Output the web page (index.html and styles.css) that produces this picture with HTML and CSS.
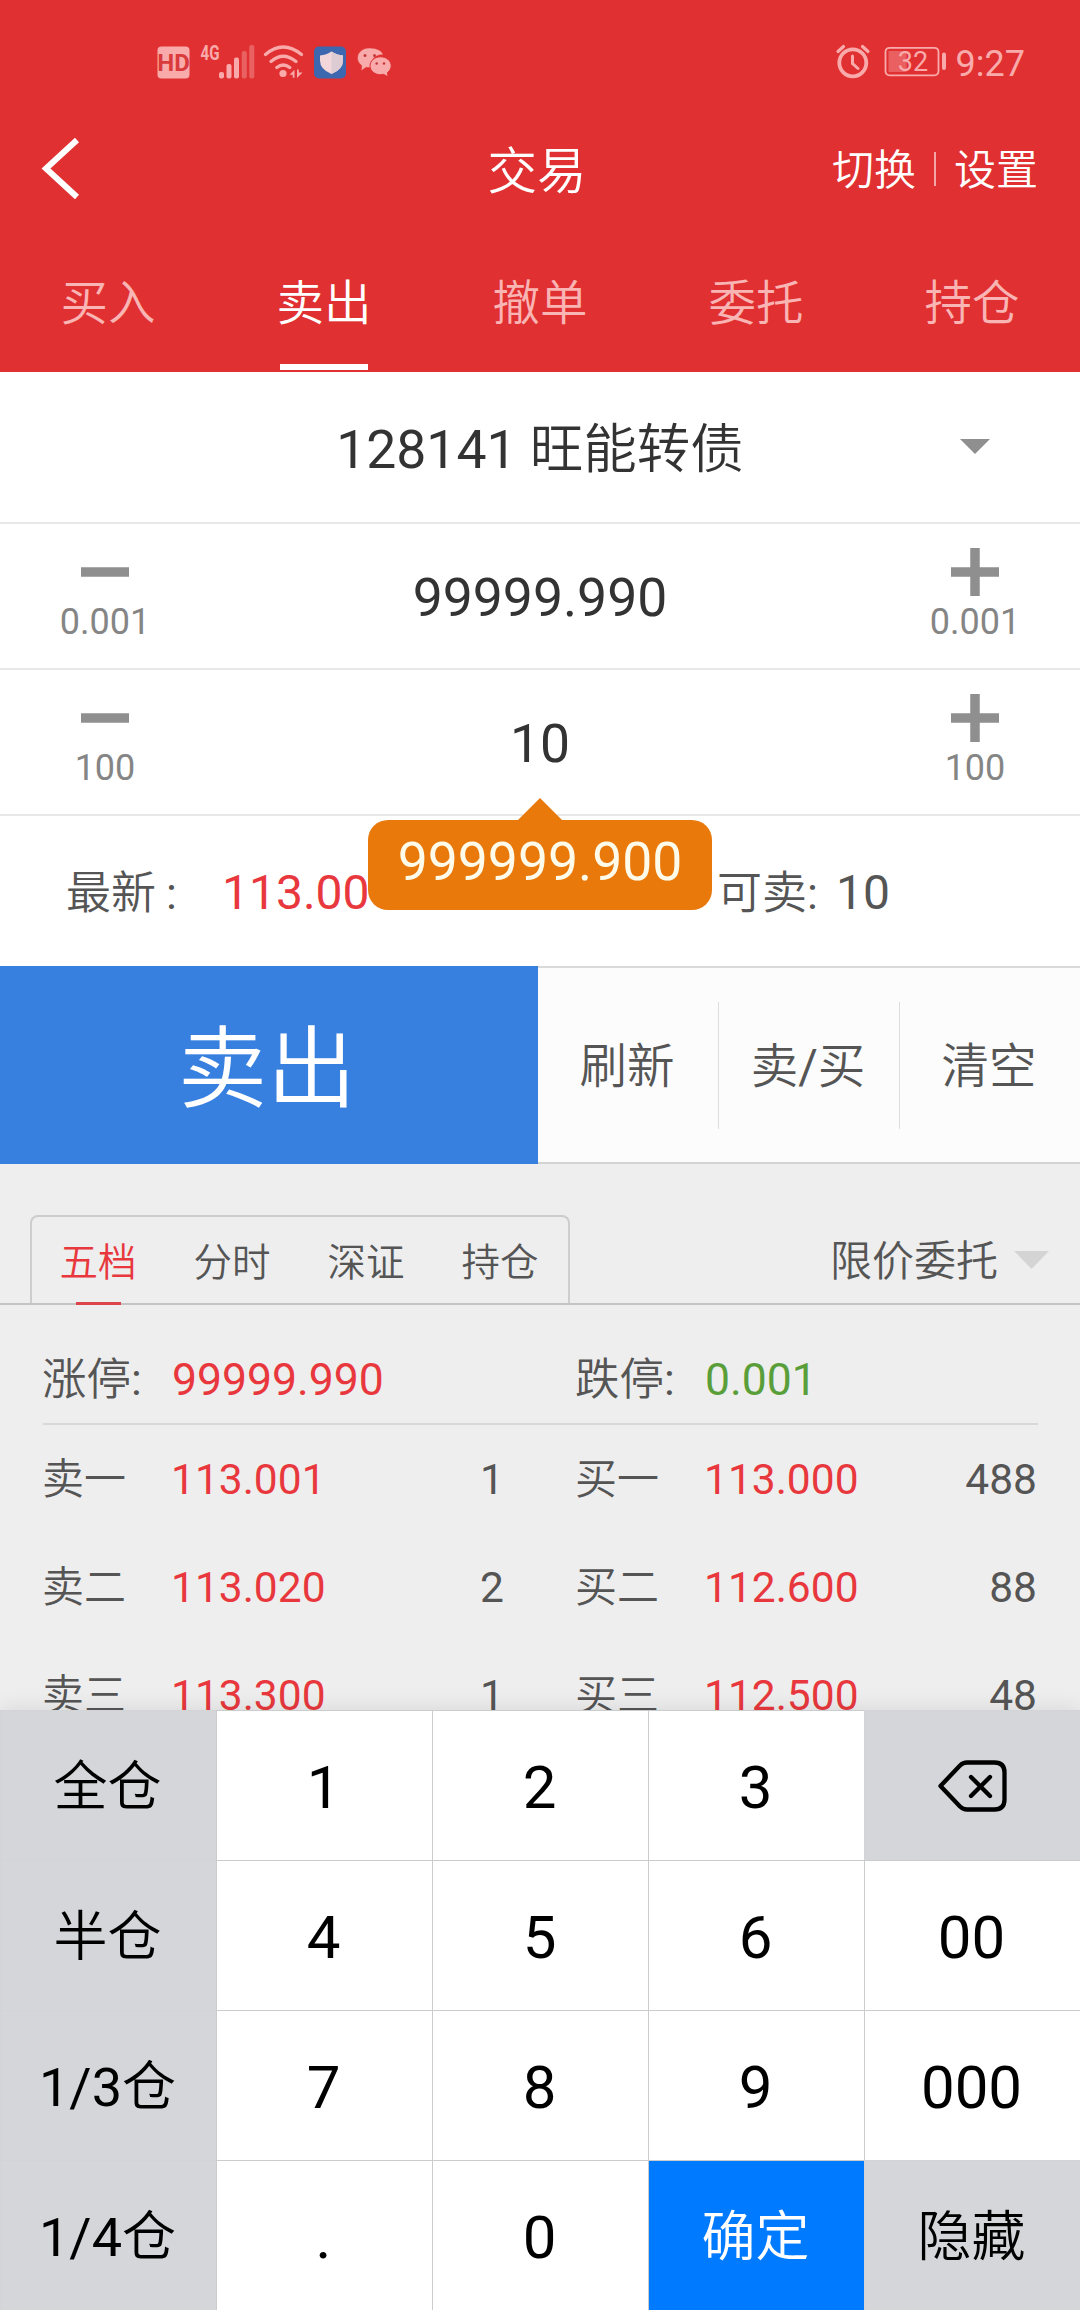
FILE: index.html
```
<!DOCTYPE html>
<html lang="zh-CN">
<head>
<meta charset="utf-8">
<title>交易</title>
<link rel="stylesheet" href="styles.css">
</head>
<body>
<div class="app">
  <header class="header">
    <div class="status">
      <svg class="status-left" width="240" height="40" viewBox="155 42 240 40">
        <g fill="#f9abab">
          <rect x="157.500" y="46.500" width="32" height="32" rx="4"/>
          <rect x="219" y="72" width="5" height="6.500" rx="2"/>
          <rect x="226.500" y="64" width="5" height="14.500" rx="2"/>
          <rect x="234" y="57.500" width="5" height="21" rx="2"/>
          <g opacity=".4">
            <rect x="241.800" y="51" width="5" height="27.500" rx="2"/>
            <rect x="249.300" y="45" width="5" height="33.500" rx="2"/>
          </g>
          <circle cx="283" cy="73.500" r="3.600"/>
          <path d="M289.500 74.800l5-5v8h-1.800v-3zM297 69.500h1.800v3h3.700l-5.500 5.500z"/>
        </g>
        <text class="hd" x="173.500" y="70.500">HD</text>
        <text class="net" x="200.500" y="60" textLength="19" lengthAdjust="spacingAndGlyphs">4G</text>
        <g fill="none" stroke="#f9abab" stroke-width="3.200" stroke-linecap="round">
          <path d="M265.500 54.500q17.500-15 36 0M271 61.500q12-10.500 25 0M276.800 67.500q6.500-5 13 0"/>
        </g>
        <rect x="314" y="46.500" width="32" height="32" rx="5" fill="#3d67ae"/>
        <path d="M331.500 51.500q5 3.500 11.500 4v5q0 9-11.500 13.500q-11.500-4.500-11.500-13.500v-5q6.500-.500 11.500-4z" fill="#f3d6da"/>
        <path d="M331.500 51.500q5 3.500 11.500 4v5q0 9-11.500 13.500z" fill="#ddcbd4"/>
        <g fill="#f9abab">
          <path d="M369 48c-6.500 0-11.500 4.500-11.500 10 0 3 1.600 5.800 4.300 7.700l-.6 5 5-3.400a13 13 0 0 0 5 .1c-1.500-8 5.500-13.500 12-12.500-1-4-6-7-14.200-6.900z" stroke="#e03031" stroke-width=".5"/>
          <path d="M380.500 56.800c6 0 10.700 4 10.700 9 0 2.800-1.500 5-3.700 6.700l.5 4.300-4.500-2.500a12 12 0 0 1-3 .4c-6 0-10.500-4-10.500-8.900s4.500-9 10.500-9z" stroke="#e03031" stroke-width="1"/>
        </g>
        <g fill="#c43a3c"><circle cx="365" cy="55.500" r="1.500"/><circle cx="374.500" cy="55.500" r="1.500"/><circle cx="376.700" cy="63.500" r="1.300"/><circle cx="384" cy="63.500" r="1.300"/></g>
      </svg>
      <svg width="114" height="40" viewBox="835.500 42 114 40">
        <g fill="none" stroke="#f9abab" stroke-linecap="round">
          <circle cx="853.300" cy="62.800" r="13.500" stroke-width="3.800"/>
          <path d="M853 56v7.500l5.500 5" stroke-width="3"/>
          <path d="M838.500 51.500l5.500-5M868.500 51.500l-5.500-5" stroke-width="3.200"/>
          <rect x="886" y="47.800" width="53" height="27.500" rx="4" stroke-width="1.800"/>
          <path d="M944.500 54.500v13.500" stroke-width="4"/>
        </g>
        <rect x="889" y="51" width="18" height="21" fill="#f9abab" opacity=".4"/>
        <text class="level" x="913.500" y="71.300">32</text>
      </svg>
      <span class="clock">9:27</span>
    </div>
    <div class="nav">
      <svg class="back" width="44" height="66" viewBox="0 0 44 66" fill="none" stroke="#fff" stroke-width="6"><path d="M37 5L6 33.500 37 62"/></svg>
      <h1 class="title">交易</h1>
      <div class="actions"><span>切换</span><i class="bar"></i><span>设置</span></div>
    </div>
    <nav class="tabs">
      <span class="tab">买入</span><span class="tab active">卖出</span><span class="tab">撤单</span><span class="tab">委托</span><span class="tab">持仓</span>
    </nav>
  </header>

  <section class="form">
    <div class="stock">
      <div class="stock-name">128141 <span class="cn">旺能转债</span></div>
      <svg class="drop" width="30" height="15" viewBox="0 0 30 15"><path d="M0 0h30L15 15z" fill="#8f8f8f"/></svg>
    </div>
    <div class="stepper">
      <div class="step"><svg width="48" height="48"><path d="M0 24h48" stroke="#8f8f8f" stroke-width="9.500"/></svg><span>0.001</span></div>
      <div class="value">99999.990</div>
      <div class="step"><svg width="48" height="48"><path d="M0 24h48M24 0v48" stroke="#8f8f8f" stroke-width="9.500"/></svg><span>0.001</span></div>
    </div>
    <div class="stepper">
      <div class="step"><svg width="48" height="48"><path d="M0 24h48" stroke="#8f8f8f" stroke-width="9.500"/></svg><span>100</span></div>
      <div class="value">10
        <div class="bubble">999999.900</div>
      </div>
      <div class="step"><svg width="48" height="48"><path d="M0 24h48M24 0v48" stroke="#8f8f8f" stroke-width="9.500"/></svg><span>100</span></div>
    </div>
    <div class="quote">
      <div class="latest"><span class="latest-label">最新<span class="colon">:</span></span><span class="num red">113.00</span></div>
      <div class="avail"><span class="avail-label">可卖<span class="reg">:</span></span><span class="num">10</span></div>
    </div>
  </section>

  <section class="buttons">
    <div class="sell">卖出</div>
    <div class="tools"><span class="tool">刷新</span><span class="tool">卖<span class="reg">/</span>买</span><span class="tool">清空</span></div>
  </section>

  <main class="market">
    <div class="market-bar">
      <div class="views"><span class="view on">五档</span><span class="view">分时</span><span class="view">深证</span><span class="view">持仓</span></div>
      <div class="order-type">限价委托<svg width="35" height="18" viewBox="0 0 35 18"><path d="M0 0h35L17.500 18z" fill="#d4d4d4"/></svg></div>
    </div>
    <div class="limits">
      <div class="limit"><span class="name">涨停<span class="reg">:</span></span><span class="price red">99999.990</span></div>
      <div class="limit"><span class="name">跌停<span class="reg">:</span></span><span class="price green">0.001</span></div>
    </div>
    <div class="book">
      <div class="level-row"><span class="name">卖一</span><span class="price red">113.001</span><span class="qty">1</span></div>
      <div class="level-row"><span class="name">买一</span><span class="price red">113.000</span><span class="qty">488</span></div>
      <div class="level-row"><span class="name">卖二</span><span class="price red">113.020</span><span class="qty">2</span></div>
      <div class="level-row"><span class="name">买二</span><span class="price red">112.600</span><span class="qty">88</span></div>
      <div class="level-row"><span class="name">卖三</span><span class="price red">113.300</span><span class="qty">1</span></div>
      <div class="level-row"><span class="name">买三</span><span class="price red">112.500</span><span class="qty">48</span></div>
    </div>
  </main>

  <section class="keypad">
    <div class="key side">全仓</div><div class="key">1</div><div class="key">2</div><div class="key">3</div>
    <div class="key side"><svg width="72" height="54" viewBox="936 1758.500 72 54" fill="none" stroke="#000" stroke-width="4.300" stroke-linejoin="round" stroke-linecap="round"><path d="M940.500 1785.500L960 1765q3-3 7-3h27.500q10 0 10 10v27q0 10-10 10H967q-4 0-7-3zM971 1776.500l19 19M990 1776.500l-19 19"/></svg></div>
    <div class="key side">半仓</div><div class="key">4</div><div class="key">5</div><div class="key">6</div><div class="key">00</div>
    <div class="key side"><span class="reg">1/3</span>仓</div><div class="key">7</div><div class="key">8</div><div class="key">9</div><div class="key">000</div>
    <div class="key side"><span class="reg">1/4</span>仓</div><div class="key">.</div><div class="key">0</div><div class="key confirm">确定</div><div class="key side">隐藏</div>
  </section>
</div>
</body>
</html>
```
FILE: styles.css
```
* { box-sizing: border-box; }
body {
  margin: 0;
  font-family: Roboto, "Noto Sans CJK SC", sans-serif;
  font-weight: 400;
  color: #555;
}
svg { display: block; flex: none; }
.app {
  width: 1080px;
  height: 2310px;
  display: flex;
  flex-direction: column;
  overflow: hidden;
  background: #eee;
}
.reg { font-weight: 400; }

/* header */
.header { height: 372px; flex: none; background: #e03031; color: #fff; }
.status {
  height: 124px;
  display: flex;
  align-items: center;
  padding: 0 55px 0 155px;
}
.status-left { margin-right: auto; }
.hd { font: 700 24px Roboto, sans-serif; fill: #d93a3c; text-anchor: middle; }
.net { font: 700 21px Roboto, sans-serif; fill: #f9abab; }
.level { font: 400 27px Roboto, sans-serif; fill: #f9abab; text-anchor: middle; }
.clock { margin-left: 7px; font-size: 36px; line-height: 40px; color: #f9abab; padding-top: 3px; }
.nav {
  height: 88px;
  display: grid;
  grid-template-columns: 1fr auto 1fr;
  align-items: center;
  padding: 0 42px 0 40px;
}
.title { margin: 0 4px 0 0; font-size: 49.5px; font-weight: 350; line-height: 60px; padding-top: 7px; }
.actions { display: flex; justify-content: flex-end; align-items: center; gap: 18px; font-size: 42px; line-height: 50px; font-weight: 350; padding-top: 5px; }
.bar { width: 2px; height: 34px; margin-top: -3px; background: #f4a5a5; }
.tabs { display: flex; height: 158px; }
.tab {
  flex: 1;
  display: flex;
  flex-direction: column;
  align-items: center;
  padding-top: 62px;
  font-size: 47.5px;
  line-height: 60px;
  font-weight: 350;
  color: #f9b4b4;
}
.tab.active { color: #fff; }
.tab.active::after { content: ""; width: 88px; height: 6px; margin-top: 30px; background: #fff; }

/* order form */
.form { flex: none; background: #fff; color: #333; }
.stock {
  height: 152px;
  display: grid;
  grid-template-columns: 210px 1fr 210px;
  align-items: center;
  justify-items: center;
  border-bottom: 2px solid #e7e7e7;
  font-size: 53.5px;
  line-height: 60px;
}
.stock-name { grid-column: 2; padding-top: 5px; }
.cn { font-weight: 350; }
.drop { margin-bottom: 2px; }
.stepper {
  height: 146px;
  display: grid;
  grid-template-columns: 210px 1fr 210px;
  border-bottom: 2px solid #e7e7e7;
}
.step { display: flex; flex-direction: column; align-items: center; padding-top: 24px; font-size: 36px; line-height: 40px; color: #858585; }
.step span { margin-top: 6px; }
.value { position: relative; align-self: center; text-align: center; font-size: 53.5px; line-height: 60px; padding-top: 4px; }
.bubble {
  position: absolute;
  z-index: 1;
  left: 50%;
  top: 110px;
  width: 344px;
  height: 90px;
  margin-left: -172px;
  border-radius: 20px;
  background: #e8790a;
  color: #fffbea;
  font-size: 53.5px;
  line-height: 84px;
}
.bubble::before {
  content: "";
  position: absolute;
  left: 149px;
  top: -22px;
  width: 46px;
  height: 23px;
  background: #e8790a;
  clip-path: polygon(50% 0, 100% 100%, 0 100%);
}
.quote {
  height: 150px;
  display: grid;
  grid-template-columns: 651px 1fr;
  align-items: center;
  padding: 5px 0 0 66px;
  font-size: 45px;
  line-height: 60px;
  color: #555;
}
.latest, .avail { display: flex; align-items: baseline; font-weight: 350; }
.latest-label { width: 156px; }
.colon { margin-left: 10px; font-weight: 400; }
.avail-label { width: 119px; }
.num { font-size: 48px; font-weight: 400; }
.red { color: #e8383d; }
.green { color: #5a9e3a; }

/* action bar */
.buttons { flex: none; height: 198px; display: flex; }
.sell {
  width: 538px;
  padding-right: 4px;
  background: #3880e0;
  color: #fff;
  font-size: 89px;
  font-weight: 350;
  line-height: 208px;
  text-align: center;
}
.tools {
  flex: 1;
  display: flex;
  align-items: center;
  background: #fcfcfc;
  border-top: 2px solid #dadada;
  border-bottom: 2px solid #d3d3d3;
}
.tool { flex: 1; height: 127px; line-height: 130px; padding-right: 2px; text-align: center; font-size: 47.5px; font-weight: 350; }
.tool + .tool { border-left: 1px solid #dedede; }

/* market */
.market { flex: 1; min-height: 0; overflow: hidden; }
.market-bar {
  height: 141px;
  display: flex;
  justify-content: space-between;
  align-items: flex-end;
  border-bottom: 2px solid #c4c4c4;
  padding: 0 31px 0 30px;
}
.views {
  width: 540px;
  height: 88px;
  display: flex;
  border: 2px solid #cdcdcd;
  border-bottom: 0;
  border-radius: 8px 8px 0 0;
}
.view { flex: 1; height: 90px; padding-right: 2px; display: flex; flex-direction: column; align-items: center; font-size: 38.5px; line-height: 92px; font-weight: 350; }
.view.on { color: #e8383d; }
.view.on::after { content: ""; flex: none; width: 45px; height: 3px; margin-top: -7px; background: #dd444c; }
.order-type { display: flex; align-items: center; gap: 16px; height: 87px; font-size: 42px; line-height: 84px; font-weight: 350; padding-top: 5px; }
.order-type svg { margin-bottom: 5px; }
.limits {
  margin: 0 42px 0 43px;
  height: 120px;
  display: grid;
  grid-template-columns: 461px 461px;
  column-gap: 72px;
  border-bottom: 2px solid #d8d8d8;
  font-size: 44.5px;
  line-height: 150px;
}
.limit, .level-row { display: flex; }
.name { width: 129px; font-weight: 350; text-indent: -1px; }
.book {
  margin: 0 42px 0 43px;
  padding-top: 1px;
  display: grid;
  grid-template-columns: 461px 461px;
  grid-auto-rows: 108px;
  column-gap: 72px;
  font-size: 42.5px;
  line-height: 108px;
}
.book .name { font-size: 42px; }
.book .price { text-indent: -1px; }
.qty { margin-left: auto; }

/* keypad */
.keypad {
  flex: none;
  position: relative;
  display: grid;
  grid-template-columns: repeat(5, 216px);
  grid-auto-rows: 150px;
  box-shadow: 0 -2px 20px rgba(0, 0, 0, .09);
}
.key {
  display: flex;
  align-items: center;
  justify-content: center;
  padding: 4px 2px 0 0;
  background: #fff;
  border-top: 1px solid #cbcccd;
  border-left: 1px solid #cbcccd;
  color: #000;
  font-size: 60px;
  line-height: 70px;
}
.key.side { background: #d4d6d9; border-color: #d2d4d6; font-size: 54px; font-weight: 350; }
.key.side svg { margin-top: -4px; }
.key.confirm { background: #007aff; color: #fff; font-size: 54px; font-weight: 350; }
```
